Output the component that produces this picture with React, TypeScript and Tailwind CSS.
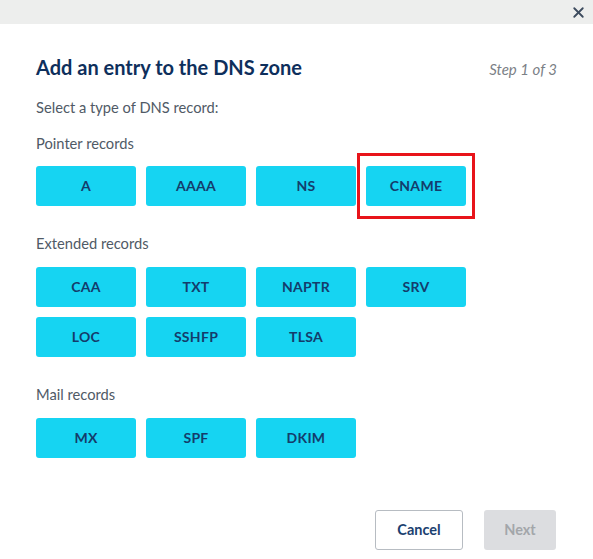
import { X } from 'lucide-react';

const groups: { label: string; items: string[][] }[] = [
  { label: 'Pointer records', items: [['A', 'AAAA', 'NS', 'CNAME']] },
  {
    label: 'Extended records',
    items: [
      ['CAA', 'TXT', 'NAPTR', 'SRV'],
      ['LOC', 'SSHFP', 'TLSA'],
    ],
  },
  { label: 'Mail records', items: [['MX', 'SPF', 'DKIM']] },
];

const RecordButton: React.FC<{ label: string; highlighted?: boolean }> = ({ label, highlighted }) => (
  <div className="relative">
    <button className="w-[100px] h-10 rounded-[3px] bg-[#16d4f2] text-[#143c6b] text-[14px] font-bold tracking-[0.3px]">
      {label}
    </button>
    {highlighted && (
      <div className="absolute -left-[9px] -top-[13px] w-[118px] h-[66px] border-[3px] border-[#e8141a] pointer-events-none" />
    )}
  </div>
);

export default function App() {
  return (
    <div className="w-[593px] h-[559px] bg-white font-['Lato','Noto_Sans',sans-serif] flex flex-col">
      {/* top bar */}
      <div className="h-6 bg-[#edeeed] flex items-center justify-end pr-[6px]">
        <X size={17} strokeWidth={2.6} className="text-[#3d4b5e]" />
      </div>

      <div className="flex-1 flex flex-col px-9">
        <div className="flex items-baseline justify-between mt-[31px]">
          <h1 className="text-[20px] font-bold text-[#0e2f5c] leading-6">Add an entry to the DNS zone</h1>
          <span className="text-[15px] italic text-[#7b8086]">Step 1 of 3</span>
        </div>

        <p className="mt-4 text-[14.7px] text-[#505a66] leading-5">Select a type of DNS record:</p>

        {groups.map((g, i) => (
          <div key={g.label} className={i === 0 ? 'mt-4' : 'mt-[27px]'}>
            <div className="text-[14.7px] text-[#505a66] leading-5">{g.label}</div>
            <div className={`${i === 0 ? 'mt-[13px]' : 'mt-[14px]'} flex flex-col gap-[10px]`}>
              {g.items.map((row, r) => (
                <div key={r} className="flex gap-[10px]">
                  {row.map((item) => (
                    <RecordButton key={item} label={item} highlighted={item === 'CNAME'} />
                  ))}
                </div>
              ))}
            </div>
          </div>
        ))}

        <div className="mt-auto mb-[9px] flex justify-end gap-[21px] pr-[1px]">
          <button className="w-[88px] h-10 rounded-[3px] border border-[#b7bcc2] bg-white text-[#1b3f70] text-[14.5px] font-bold">
            Cancel
          </button>
          <button className="w-[72px] h-10 rounded-[3px] bg-[#dcdde0] text-[#a3a6aa] text-[14.5px] font-bold">
            Next
          </button>
        </div>
      </div>
    </div>
  );
}
